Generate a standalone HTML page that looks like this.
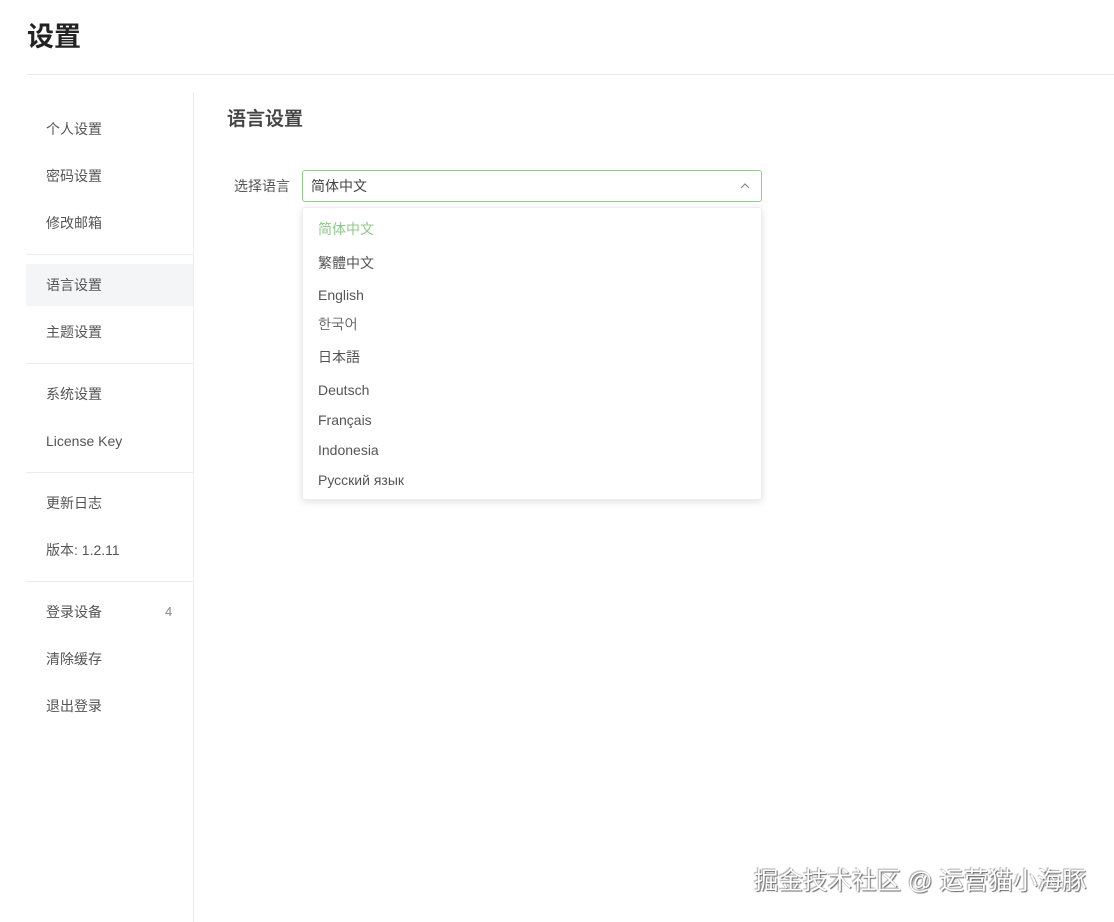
<!DOCTYPE html>
<html><head><meta charset="utf-8"><style>
*{margin:0;padding:0;box-sizing:border-box}
body{width:1114px;height:922px;background:#fff;font-family:"Liberation Sans","Noto Sans CJK SC",sans-serif;color:#555;position:relative;overflow:hidden;font-size:14px}
.a{position:absolute;white-space:nowrap;line-height:1}
.hr{position:absolute;height:1px;background:#ececec}
</style></head><body>
<div class="a" style="left:27px;top:24px;font-size:27px;font-weight:bold;color:#222">设置</div>
<div class="hr" style="left:27px;top:74px;width:1087px"></div>
<div style="position:absolute;left:193px;top:92px;width:1px;height:830px;background:#ececec"></div>
<div style="position:absolute;left:26px;top:264px;width:167px;height:42px;background:#f4f5f6"></div>
<div class="hr" style="left:26px;top:254px;width:167px"></div>
<div class="hr" style="left:26px;top:363px;width:167px"></div>
<div class="hr" style="left:26px;top:472px;width:167px"></div>
<div class="hr" style="left:26px;top:581px;width:167px"></div>
<div class="a" style="left:46px;top:122px">个人设置</div>
<div class="a" style="left:46px;top:169px">密码设置</div>
<div class="a" style="left:46px;top:216px">修改邮箱</div>
<div class="a" style="left:46px;top:278px">语言设置</div>
<div class="a" style="left:46px;top:325px">主题设置</div>
<div class="a" style="left:46px;top:387px">系统设置</div>
<div class="a" style="left:46px;top:434px">License Key</div>
<div class="a" style="left:46px;top:496px">更新日志</div>
<div class="a" style="left:46px;top:543px">版本: 1.2.11</div>
<div class="a" style="left:46px;top:605px">登录设备</div>
<div class="a" style="left:165px;top:605px;color:#888;font-size:13px">4</div>
<div class="a" style="left:46px;top:652px">清除缓存</div>
<div class="a" style="left:46px;top:699px">退出登录</div>
<div class="a" style="left:227px;top:110px;font-size:19px;color:#444;font-weight:500;-webkit-text-stroke:0.3px #444">语言设置</div>
<div class="a" style="left:234px;top:179px">选择语言</div>
<div style="position:absolute;left:302px;top:170px;width:460px;height:32px;border:1px solid #8ed08a;border-radius:3px"></div>
<div class="a" style="left:311px;top:179px;color:#444">简体中文</div>
<svg style="position:absolute;left:740px;top:182px" width="10" height="8"><path d="M1 6L5 2L9 6" fill="none" stroke="#888" stroke-width="1.2"/></svg>
<div style="position:absolute;left:302px;top:207px;width:460px;height:293px;background:#fff;border:1px solid #eee;border-radius:3px;box-shadow:0 2px 8px rgba(0,0,0,.12)"></div>
<div class="a" style="left:318px;top:222px;color:#8cc98a">简体中文</div>
<div class="a" style="left:318px;top:256px">繁體中文</div>
<div class="a" style="left:318px;top:288px">English</div>
<div class="a" style="left:318px;top:317px;font-family:'Liberation Sans','NanumGothic',sans-serif">한국어</div>
<div class="a" style="left:318px;top:350px;font-family:'Liberation Sans','Noto Sans CJK JP',sans-serif">日本語</div>
<div class="a" style="left:318px;top:383px">Deutsch</div>
<div class="a" style="left:318px;top:413px">Français</div>
<div class="a" style="left:318px;top:443px">Indonesia</div>
<div class="a" style="left:318px;top:473px">Русский язык</div>
<div class="a" style="left:754px;top:870px;font-size:24.5px;color:#fff;text-shadow:1px 1px 1px #666,-1px -1px 1px #aaa">掘金技术社区 @ 运营猫小海豚</div>
</body></html>
